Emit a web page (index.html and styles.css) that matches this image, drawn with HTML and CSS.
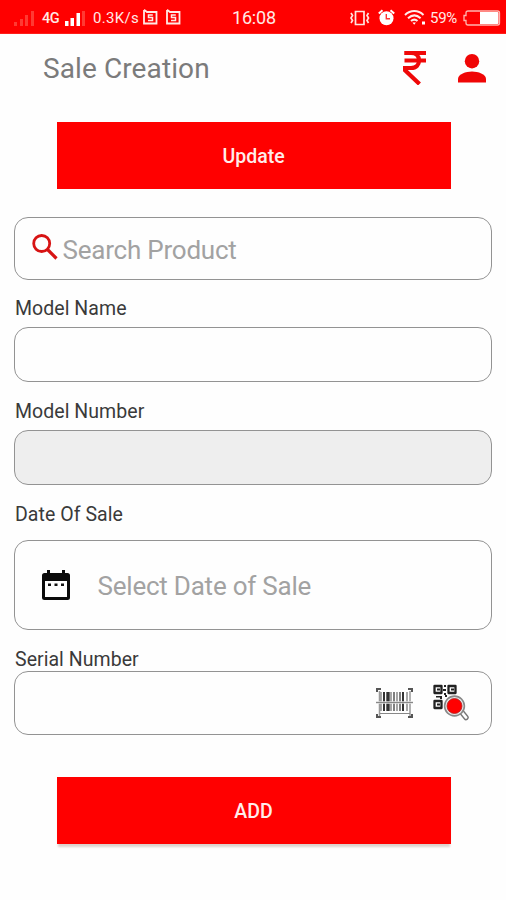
FILE: index.html
```html
<!DOCTYPE html>
<html lang="en">
<head>
<meta charset="utf-8">
<title>Sale Creation</title>
<link rel="stylesheet" href="styles.css">
</head>
<body>
<div class="status">
  <svg class="signal-off" width="21" height="17" viewBox="0 0 21 17" fill="#ff3a33"><path d="M0 12h3v4H0zM6 9h3v7H6zM11 5h3v11h-3zM17 1h3v15h-3z"/></svg>
  <span class="network">4G</span>
  <svg class="signal" width="22" height="17" viewBox="0 0 22 17" fill="#fff"><path d="M0 11h3.500v5H0zM5.500 8h3.500v8H5.500zM11.500 3h3.500v13h-3.500z"/><path fill="#ff3a33" d="M17 1h3v15h-3z"/></svg>
  <span class="speed">0.3K/s</span>
  <svg class="sim" width="15" height="16" viewBox="0 0 15 16" fill="none" stroke="#ffe9e5"><path stroke-width="1.8" d="M1 1v13.5h12.5V3H4L1 .8"/><path stroke-width="1.5" d="M9.8 6H5.5v2.6h4v2.8H5"/></svg>
  <svg class="sim" width="15" height="16" viewBox="0 0 15 16" fill="none" stroke="#ffe9e5"><path stroke-width="1.8" d="M1 1v13.5h12.5V3H4L1 .8"/><path stroke-width="1.5" d="M9.8 6H5.5v2.6h4v2.8H5"/></svg>
  <span class="clock">16:08</span>
  <svg class="vibrate" width="20" height="16" viewBox="0 0 20 16" fill="none" stroke="#ffe4e0" stroke-width="1.700"><path d="M5.500 1.500H14v13H5.500zM1 3l1.500 2.500L1 8l1.500 2.500L1 13M18.500 3L17 5.500 18.500 8 17 10.500l1.500 2.500"/></svg>
  <svg class="alarm" width="17" height="17" viewBox="0 0 17 17"><circle cx="8.500" cy="9.300" r="7" fill="#fff"/><path d="M.8 4.500L4.500 1.200M16.200 4.500L12.500 1.200" stroke="#fff" stroke-width="2"/><path d="M8.300 5v4.700H12" fill="none" stroke="#f33" stroke-width="1.400"/></svg>
  <svg class="wifi" width="22" height="17" viewBox="0 0 22 17" fill="none" stroke="#ffeceb" stroke-width="2"><path d="M1 6c5.500-5.200 13-5.200 18.500 0M4 9.200c4-3.600 8.700-3.600 12.600 0M7 12.100c2.200-1.900 4.400-1.900 6.500 0"/><path d="M8.500 13.500h3.400l-1.700 2.200zM18 12.500h3v3h-3z" fill="#fff" stroke="none"/></svg>
  <span class="percent">59%</span>
  <svg class="battery" width="38" height="16" viewBox="0 0 38 16"><path d="M5 1h29.500q2 0 2 2v10q0 2-2 2H5q-2 0-2-2v-2.500H1v-5h2V3q0-2 2-2z" fill="#f00" stroke="#ffb5ae" stroke-width="1.300"/><path d="M17 2h17.500q1 0 1 1v10q0 1-1 1H17z" fill="#fff"/></svg>
</div>
<header class="header">
  <h1>Sale Creation</h1>
  <svg class="rupee" width="24" height="34" viewBox="0 0 24 34" fill="none" stroke="#ef0808" stroke-width="4"><path d="M1.500 2h21.500M1.500 9.500h21.500"/><path d="M1.500 2h6.500c5.500 0 8 3.500 8 7.500s-2.500 7.500-8 7.500H1.500v1.800L16.500 33" stroke-width="4.200"/></svg>
  <svg class="person" width="30" height="29" viewBox="0 0 30 29" fill="#f00606"><circle cx="15" cy="7.200" r="7.200"/><path d="M1 28.500V25c0-4.800 8-7.500 14-7.500S29 20.200 29 25v3.500z"/></svg>
</header>
<main>
  <button class="button">Update</button>
  <div class="box search">
    <svg width="26" height="26" viewBox="0 0 26 26" fill="none" stroke="#d71313"><circle cx="9.700" cy="9.500" r="8" stroke-width="2.800"/><path d="M15.500 15.500l9 9" stroke-width="3.200"/></svg>
    <span>Search Product</span>
  </div>
  <label class="label name">Model Name</label>
  <div class="box short"></div>
  <label class="label number">Model Number</label>
  <div class="box short disabled"></div>
  <label class="label day">Date Of Sale</label>
  <div class="box date">
    <svg width="28" height="30" viewBox="0 0 28 30"><path fill="#0b0b0b" fill-rule="evenodd" d="M5 0h3v3h12V0h3v3h2.500Q28 3 28 5.500v22q0 2.500-2.500 2.500h-23Q0 30 0 27.500v-22Q0 3 2.500 3H5zM3 11v16h22V11z"/><path fill="#111" d="M6 13.500h3v2.500H6zM12.500 13.500h3v2.500h-3zM19 13.500h3v2.500h-3z"/></svg>
    <span>Select Date of Sale</span>
  </div>
  <label class="label serial-label">Serial Number</label>
  <div class="box serial">
    <svg width="37" height="32" viewBox="0 0 37 32" fill="none"><path d="M1 5V2h4M32 2h4v3M1 27v3h4M32 30h4v-3" stroke="#555" stroke-width="2"/><path d="M3.500 4v25M34 4v25" stroke="#999" stroke-width="1.500"/><path d="M5 5v19M15 5v19M21 5v19M31 5v19" stroke="#777" stroke-width="1.300"/><path d="M8 5v19M27 5v19" stroke="#333" stroke-width="2"/><path d="M12 5v19" stroke="#333" stroke-width="3.400"/><path d="M18 5v19M24 5v19" stroke="#555" stroke-width="1.500"/><path d="M0 15.500h37" stroke="#ddd" stroke-width="2.600"/><path d="M0 15.500h37M4 26.500h30" stroke="#888" stroke-width="1.200"/></svg>
    <svg class="qr" width="36" height="37" viewBox="0 0 36 37" fill="none"><path d="M1.500 2h7v7h-7zM15.500 2h7v7h-7zM1.500 17h7v7h-7z" stroke="#222" stroke-width="2.300" stroke-linejoin="round"/><path d="M4 4.500h3v2H4zM18 4.500h3v2h-3zM4 19.500h3v2H4zM11 1h2v2h-2zM10 5h3v2h-3zM11 9h2v2h-2zM3 12h5v1.500H3zM7 12h2v3H7zM12 11h2v2h-2z" fill="#222"/><path d="M29 28.500l4 5" stroke="#777" stroke-width="5.500" stroke-linecap="round"/><path d="M29 28.500l4 5" stroke="#fff" stroke-width="2.800" stroke-linecap="round"/><circle cx="21.500" cy="22" r="9.900" fill="#e8e8e8" stroke="#888" stroke-width="1.600"/><circle cx="21.500" cy="22" r="7.500" fill="#f00" stroke="#a22" stroke-width=".8"/></svg>
  </div>
  <button class="button add">ADD</button>
</main>
</body>
</html>
```

FILE: styles.css
```css
* { box-sizing: border-box; }
body { margin: 0; width: 506px; height: 900px; overflow: hidden; background: #fefefe; font-family: Roboto, sans-serif; }
svg { display: block; flex: none; }
.status { display: flex; height: 34px; padding: 2px 0 0 14px; align-items: center; background: #f00; color: #ffe9e5; white-space: nowrap; border-bottom: 1px solid #ff1e1a; }
.status span { flex: none; line-height: 20px; }
.signal-off, .signal { margin-top: 1px; }
.status .network { width: 23px; margin-left: 7px; font-size: 14.5px; font-weight: 500; letter-spacing: -0.4px; padding-top: 3px; }
.status .speed { width: 50px; margin-left: 6px; font-size: 15px; letter-spacing: 0.3px; padding-top: 1px; }
.sim { margin-right: 8px; margin-top: -1px; }
.status .clock { width: 118px; margin-left: 43px; font-size: 18px; letter-spacing: -0.2px; padding-top: 1px; }
.alarm { margin-left: 8px; }
.wifi { margin-left: 9px; }
.status .percent { width: 33px; margin-left: 4px; font-size: 15px; letter-spacing: -0.3px; padding-top: 1px; }
.header { display: flex; height: 69px; padding: 0 19px 0 43px; align-items: center; }
h1 { margin: 0; flex: 1; font-size: 28px; font-weight: 400; color: #7b7b7b; letter-spacing: 0.1px; line-height: 34px; padding-top: 1px; }
.rupee { margin-bottom: 2px; }
.person { margin-left: 30px; }
main { display: flex; flex-direction: column; padding: 0 14px; }
.button { width: 394px; height: 67px; margin: 19px 0 0 42.5px; padding: 0; border: 0; background: #f00; color: #ffeceb; font: 500 19.5px/69px Roboto, sans-serif; }
.box { display: flex; align-items: center; width: 478px; border: 1.5px solid #939393; border-radius: 14px; background: #fefefe; color: #a2a2a2; font-size: 26px; letter-spacing: -0.22px; white-space: nowrap; }
.search { height: 63px; margin-top: 28px; padding-left: 17px; }
.search span { margin-left: 4.5px; padding-top: 2px; }
.search svg { margin-bottom: 3px; }
.label { height: 24px; padding-left: 1px; font-size: 19.5px; line-height: 25px; letter-spacing: 0.05px; color: #3a3a3a; }
.name { margin: 16px 0 7px; }
.short { height: 55px; }
.number { margin: 17px 0 7px; }
.disabled { background: #eee; }
.day { margin: 17px 0 14px; }
.date { height: 90px; padding-left: 27px; }
.date span { margin-left: 27.5px; padding-top: 2px; }
.serial-label { margin: 17px 0 0; }
.serial { height: 64px; padding-left: 361px; }
.qr { margin-left: 20px; margin-bottom: 2px; }
.add { margin-top: 42px; box-shadow: 0 4px 2px -1px #ddd2ce; }
```
